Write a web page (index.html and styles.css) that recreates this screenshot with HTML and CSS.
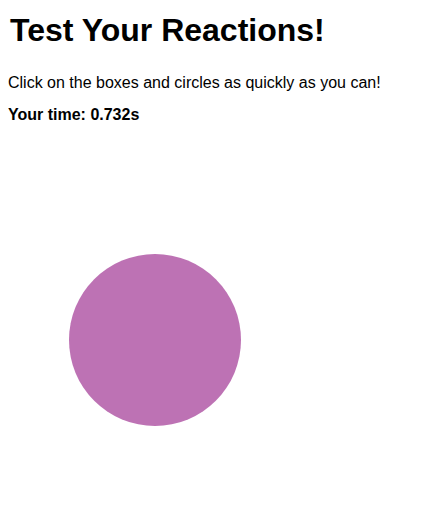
FILE: index.html
```html
<!DOCTYPE html>
<html>
<head>
<meta charset="utf-8">
<link rel="stylesheet" href="styles.css">
</head>
<body>
<h1 class="title">Test Your Reactions!</h1>
<p class="intro">Click on the boxes and circles as quickly as you can!</p>
<p class="time">Your time: <span class="time-value">0.732s</span></p>
<div class="arena">
  <div class="shape"></div>
</div>
</body>
</html>
```
FILE: styles.css
```css
html, body {
  background: #fff;
}
body {
  margin: 8px;
  font-family: "Liberation Sans", Arial, sans-serif;
  color: #000;
}
.title {
  font-size: 32px;
  font-weight: bold;
  margin: 4px 0 0 2px;
}
.intro {
  font-size: 16px;
  margin: 25px 0 0;
}
.time {
  font-size: 16px;
  font-weight: bold;
  margin: 14px 0 0;
}
.arena {
  position: relative;
  height: 380px;
}
.shape {
  position: absolute;
  left: 61px;
  top: 130px;
  width: 172px;
  height: 172px;
  border-radius: 50%;
  background: #bd72b4;
}
```
